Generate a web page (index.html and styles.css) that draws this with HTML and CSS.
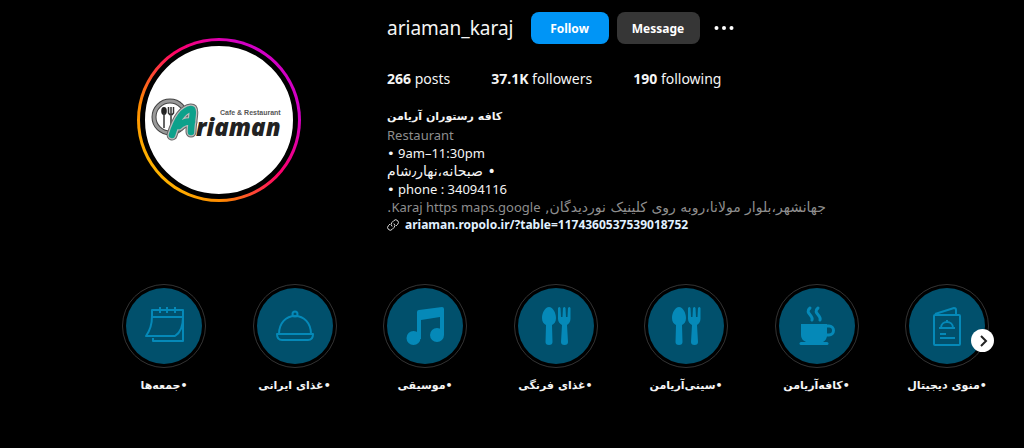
FILE: index.html
```html
<!DOCTYPE html>
<html lang="en">
<head>
  <meta charset="UTF-8">
  <meta name="viewport" content="width=device-width, initial-scale=1.0">
  <title>ariaman_karaj</title>
  <link rel="stylesheet" href="styles.css">
</head>
<body>
  <main class="profile">
    <header class="profile-header">
      <div class="avatar">
        <div class="avatar-photo">
          <svg class="logo" viewBox="0 0 145 60" role="img" aria-label="Ariaman Cafe &amp; Restaurant">
            <!-- plate with cutlery -->
            <circle cx="25" cy="27" r="16" fill="#fff" stroke="#444" stroke-width="5"/>
            <circle cx="25" cy="27" r="16" fill="none" stroke="#999" stroke-width="3"/>
            <ellipse cx="19" cy="21" rx="2.8" ry="4" fill="#222"/>
            <path d="M19 23v15M26 25v13M23.500 17v6q2.500 4 5 0v-6M26 17v7" fill="none" stroke="#333" stroke-width="1.500"/>
            <path d="M36 19v8M40 18v10" stroke="#555" stroke-width="1.500"/>
            <!-- big brush initial -->
            <g fill="none" stroke-linecap="round" stroke-linejoin="round">
              <path d="M27 45C32 29 38 20 46 19C50 19 46 31 46 42M34 36Q41 30 47 32" stroke="#666" stroke-width="11"/>
              <path d="M27 45C32 29 38 20 46 19C50 19 46 31 46 42M34 36Q41 30 47 32" stroke="#bbb" stroke-width="9"/>
              <path d="M27 45C32 29 38 20 46 19C50 19 46 31 46 42M34 36Q41 30 47 32" stroke="#0da18b" stroke-width="6.500"/>
            </g>
            <text class="logo-name" x="51" y="46">riaman</text>
            <text class="logo-tag" x="75" y="25">Cafe &amp; Restaurant</text>
          </svg>
        </div>
      </div>

      <section class="info">
        <div class="title-row">
          <h1 class="username">ariaman_karaj</h1>
          <button class="btn btn-follow" type="button">Follow</button>
          <button class="btn btn-message" type="button">Message</button>
          <button class="btn-more" type="button" aria-label="Options">
            <svg width="24" height="24" viewBox="0 0 24 24" fill="#fff"><circle cx="4.500" cy="12" r="2"/><circle cx="12" cy="12" r="2"/><circle cx="19.500" cy="12" r="2"/></svg>
          </button>
        </div>

        <ul class="stats">
          <li><b>266</b> posts</li>
          <li><b>37.1K</b> followers</li>
          <li><b>190</b> following</li>
        </ul>

        <div class="bio">
          <h2 class="name" dir="rtl" lang="fa">کافه رستوران آریامن</h2>
          <p class="muted">Restaurant</p>
          <p><span class="dot">•</span> 9am–11:30pm</p>
          <p class="fa" dir="rtl" lang="fa">• صبحانه،نهار٫شام</p>
          <p><span class="dot">•</span> phone : 34094116</p>
          <p class="muted fa" dir="rtl" lang="fa">جهانشهر،بلوار مولانا،روبه روی کلینیک نوردیدگان, <span class="latin">Karaj https maps.google</span>.</p>
          <a class="site" href="#">
            <svg width="12" height="12" viewBox="0 0 24 24" fill="none" stroke="#e0e0e0" stroke-width="2" stroke-linecap="round"><path d="M9.700 14.300a5 5 0 0 1 0-7.100l4-4a5.300 5.300 0 0 1 7.500 7.500l-2.700 2.700M14.300 9.700a5 5 0 0 1 0 7.100l-4 4a5.300 5.300 0 0 1-7.500-7.500l2.700-2.700"/></svg>
            ariaman.ropolo.ir/?table=1174360537539018752
          </a>
        </div>
      </section>
    </header>

    <nav class="highlights" aria-label="Highlights">
      <a class="highlight" href="#">
        <span class="ring"><span class="cover">
          <svg viewBox="0 0 76 76"><g class="line"><path d="M26 26v-4h31v31H27v-3M26 24v4c0 10-3 16-6 20h29c5-3 8-9 8-19v-1M26 29h31"/><path d="M34 19v6M41 19v6M49 19v6"/></g></svg>
        </span></span>
        <span class="label" dir="rtl" lang="fa">•جمعه‌ها</span>
      </a>
      <a class="highlight" href="#">
        <span class="ring"><span class="cover">
          <svg viewBox="0 0 76 76"><g class="line"><path d="M22 46c0-11 7-18 16-18s16 7 16 18"/><circle cx="38" cy="26" r="2.500"/><path d="M20 46h36q0 6-5 6H25q-5 0-5-6z"/></g></svg>
        </span></span>
        <span class="label" dir="rtl" lang="fa">•غذای ایرانی</span>
      </a>
      <a class="highlight" href="#">
        <span class="ring"><span class="cover">
          <svg viewBox="0 0 76 76"><g class="solid"><path d="M30 24q0-2 2-2l23-3q2 0 2 2v26h-4V29l-19 3v19h-4z"/><circle cx="26.500" cy="50" r="7"/><circle cx="50" cy="47" r="7"/></g></svg>
        </span></span>
        <span class="label" dir="rtl" lang="fa">•موسیقی</span>
      </a>
      <a class="highlight" href="#">
        <span class="ring"><span class="cover">
          <svg viewBox="0 0 76 76"><g class="solid"><path d="M31 19c4 0 7 6 7 11 0 4-2 6-4 7l.5 17q0 3-3.500 3t-3.500-3l.5-17c-2-1-4-3-4-7 0-5 3-11 7-11z"/><path d="M40 20q1.500-2 2.500 0l.5 9h1.500l.5-9q1.500-2 2.500 0l.5 9h1.500l.5-9q1.500-2 2.500 0v11c0 3-2 5-3.500 6l1 17q0 3-3.500 3t-3.500-3l1-17c-2-1-4-3-4-6z"/></g></svg>
        </span></span>
        <span class="label" dir="rtl" lang="fa">•غذای فرنگی</span>
      </a>
      <a class="highlight" href="#">
        <span class="ring"><span class="cover">
          <svg viewBox="0 0 76 76"><g class="solid"><path d="M31 19c4 0 7 6 7 11 0 4-2 6-4 7l.5 17q0 3-3.500 3t-3.500-3l.5-17c-2-1-4-3-4-7 0-5 3-11 7-11z"/><path d="M40 20q1.500-2 2.500 0l.5 9h1.500l.5-9q1.500-2 2.500 0l.5 9h1.500l.5-9q1.500-2 2.500 0v11c0 3-2 5-3.500 6l1 17q0 3-3.500 3t-3.500-3l1-17c-2-1-4-3-4-6z"/></g></svg>
        </span></span>
        <span class="label" dir="rtl" lang="fa">•سینی‌آریامن</span>
      </a>
      <a class="highlight" href="#">
        <span class="ring"><span class="cover">
          <svg viewBox="0 0 76 76"><g class="solid"><path d="M22 36h26v11q0 5-4 7H27q-5-2-5-7z"/><path d="M22 54h26q1.500 0 1.500 1.500T48 57H22q-1.500 0-1.500-1.500T22 54z"/></g><path class="handle" d="M47 38h3a4.500 4.500 0 0 1 0 9h-3"/><path class="steam" d="M31 20c-6 5 4 7 2 12M39 20c-6 5 4 7 2 12"/></svg>
        </span></span>
        <span class="label" dir="rtl" lang="fa">•کافه‌آریامن</span>
      </a>
      <a class="highlight" href="#">
        <span class="ring"><span class="cover">
          <svg viewBox="0 0 76 76"><g class="line"><rect x="25" y="27" width="26" height="30" rx="1"/><path d="M26 26l19-6q2 0 2 2v5M30 40h16M32 40c0-8 12-8 12 0M38 34v-2M31 46h6M31 50h15"/></g></svg>
        </span></span>
        <span class="label" dir="rtl" lang="fa">•منوی دیجیتال</span>
      </a>
      <button class="next" type="button" aria-label="Next">
        <svg width="12" height="12" viewBox="0 0 12 12" fill="none" stroke="#222" stroke-width="2"><path d="M4 1l5 5-5 5"/></svg>
      </button>
    </nav>
  </main>
</body>
</html>
```
FILE: styles.css
```css
* {
  box-sizing: border-box;
}

body {
  margin: 0;
  background: #000;
  color: #f5f5f5;
  font-family: "Noto Sans", "DejaVu Sans", sans-serif;
  font-size: 13px;
  line-height: 18px;
}

h1, h2, p, ul {
  margin: 0;
  padding: 0;
}

a {
  color: inherit;
  text-decoration: none;
}

button {
  border: none;
  padding: 0;
  font-family: inherit;
  cursor: pointer;
}

.profile {
  padding: 12px 35px 0 122px;
}

.profile-header {
  display: flex;
  align-items: flex-start;
  gap: 86px;
  padding-left: 15px;
}

.avatar {
  flex: none;
  width: 164px;
  height: 164px;
  margin-top: 26px;
  padding: 3px;
  border-radius: 50%;
  background: linear-gradient(50deg, #ffc800 8%, #ff8a00 28%, #ff0069 55%, #d300c5 78%);
}

.avatar-photo {
  display: flex;
  align-items: center;
  height: 100%;
  border: 5px solid #000;
  border-radius: 50%;
  background: #fff;
  overflow: hidden;
}

.logo {
  width: 145px;
  flex: none;
}

.logo-name {
  font: italic 800 24px "Open Sans", sans-serif;
  fill: #222;
}

.logo-tag {
  font: bold 7px "Liberation Sans", sans-serif;
  fill: #555;
}

.info {
  flex: 1;
  min-width: 0;
}

.title-row {
  display: flex;
  align-items: center;
  gap: 8px;
}

.username {
  margin-right: 9px;
  font-size: 19px;
  font-weight: 400;
  line-height: 28px;
}

.btn {
  height: 32px;
  border-radius: 8px;
  color: #fff;
  font-size: 12px;
  font-weight: 700;
}

.btn-follow {
  width: 78px;
  background: #0095f6;
}

.btn-message {
  width: 83px;
  background: #363636;
}

.btn-more {
  display: flex;
  padding: 4px;
  background: none;
}

.stats {
  display: flex;
  gap: 41px;
  margin-top: 26px;
  font-size: 14px;
  list-style: none;
}

.bio {
  margin-top: 20px;
}

.bio p {
  height: 18px;
}

.bio .fa {
  text-align: left;
  white-space: nowrap;
}

.fa {
  font-family: "DejaVu Sans", sans-serif;
  font-size: 14px;
}

.latin {
  font-family: "Noto Sans", sans-serif;
  font-size: 13px;
}

.dot {
  font-family: "DejaVu Sans", sans-serif;
}

.name {
  font-family: "DejaVu Sans", sans-serif;
  font-size: 11px;
  font-weight: 700;
  line-height: 18px;
  text-align: left;
}

.muted {
  color: #8e8e8e;
}

.site {
  display: flex;
  align-items: center;
  gap: 6px;
  color: #e0f1ff;
  font-size: 12px;
  font-weight: 700;
}

.highlights {
  position: relative;
  display: flex;
  justify-content: space-between;
  margin-top: 50px;
}

.highlight {
  display: flex;
  flex-direction: column;
  align-items: center;
  gap: 9px;
  width: 84px;
}

.ring {
  width: 84px;
  height: 84px;
  padding: 3px;
  border: 1px solid #333;
  border-radius: 50%;
}

.cover {
  display: block;
  height: 100%;
  border-radius: 50%;
  background: #01506c;
}

.cover svg {
  display: block;
}

.line {
  fill: none;
  stroke: #0589b8;
  stroke-width: 2;
  stroke-linejoin: round;
}

.solid {
  fill: #0589b8;
}

.handle,
.steam {
  fill: none;
  stroke: #0589b8;
  stroke-width: 3;
  stroke-linecap: round;
}

.label {
  font-family: "DejaVu Sans", sans-serif;
  font-size: 11px;
  font-weight: 700;
  white-space: nowrap;
}

/* arrow over the last highlight */
.next {
  position: absolute;
  top: 45px;
  right: -5px;
  display: flex;
  align-items: center;
  justify-content: center;
  width: 23px;
  height: 23px;
  border-radius: 50%;
  background: #fff;
}
```
